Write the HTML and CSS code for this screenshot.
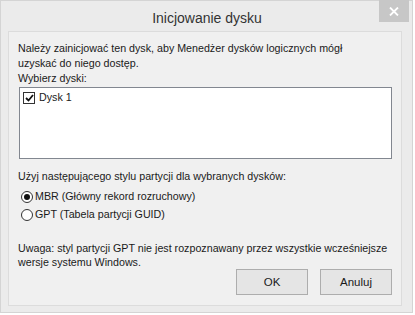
FILE: index.html
```html
<!DOCTYPE html>
<html lang="pl">
<head>
  <meta charset="UTF-8">
  <title>Inicjowanie dysku</title>
  <link rel="stylesheet" href="styles.css">
</head>
<body>
  <div class="window">
    <header class="titlebar">
      <span class="title">Inicjowanie dysku</span>
      <button type="button" class="close-btn" aria-label="Zamknij">
        <svg width="10" height="9" viewBox="0 0 10 9">
          <path d="M1 0.5 L9 8.5 M9 0.5 L1 8.5" stroke="#fff" stroke-width="1.8" fill="none"/>
        </svg>
      </button>
    </header>
    <main class="client">
      <p class="intro">Należy zainicjować ten dysk, aby Menedżer dysków logicznych mógł<br>uzyskać do niego dostęp.</p>

      <p class="label">Wybierz dyski:</p>
      <div class="listbox">
        <label class="check-row">
          <span class="checkbox">
            <svg width="9" height="8" viewBox="0 0 9 8">
              <path d="M1 4 L3.5 6.5 L8 1" stroke="#111" stroke-width="1.8" fill="none"/>
            </svg>
          </span>
          Dysk 1
        </label>
      </div>

      <p class="label styles-label">Użyj następującego stylu partycji dla wybranych dysków:</p>
      <div class="radio-group">
        <label class="radio-row"><span class="radio checked"></span>MBR (Główny rekord rozruchowy)</label>
        <label class="radio-row"><span class="radio"></span>GPT (Tabela partycji GUID)</label>
      </div>

      <p class="note">Uwaga: styl partycji GPT nie jest rozpoznawany przez wszystkie wcześniejsze<br>wersje systemu Windows.</p>

      <div class="buttons">
        <button type="button" class="btn">OK</button>
        <button type="button" class="btn">Anuluj</button>
      </div>
    </main>
  </div>
</body>
</html>
```

FILE: styles.css
```css
body {
  margin: 0;
  background: #fff;
  font-family: "Liberation Sans", Arial, sans-serif;
  font-size: 10.7px;
  color: #1a1a1a;
}
.window {
  box-sizing: border-box;
  width: 413px;
  height: 313px;
  border: 1px solid #d4d4d4;
  background: #ebebeb;
  display: flex;
  flex-direction: column;
}
.titlebar {
  height: 30px;
  flex-shrink: 0;
  display: flex;
  align-items: center;
  justify-content: center;
  position: relative;
}
.title {
  font-size: 14px;
  color: #333;
  margin-top: 3px;
  padding-left: 1px;
}
.close-btn {
  position: absolute;
  top: -1px;
  right: 3px;
  width: 30px;
  height: 22px;
  border: none;
  background: #c7c7c7;
  display: flex;
  align-items: center;
  justify-content: center;
  padding: 0;
}
.client {
  flex: 1;
  margin: 0 10px 6px 7px;
  border: 1px solid #dcdcdc;
  background: #f0f0f0;
  padding: 9px 9px 0 9px;
  white-space: nowrap;
}
p {
  margin: 0;
  line-height: 15px;
}
.label {
  line-height: 14px;
  margin-bottom: 2px;
}
.listbox {
  box-sizing: border-box;
  height: 72px;
  margin-left: 1px;
  border: 1px solid #828790;
  background: #fff;
  padding: 2px 3px;
  margin-bottom: 10px;
}
.check-row {
  display: flex;
  align-items: center;
  gap: 4px;
  line-height: 15px;
}
.checkbox {
  width: 10px;
  height: 10px;
  border: 1px solid #333;
  background: #fff;
  display: flex;
  align-items: center;
  justify-content: center;
}
.styles-label {
  line-height: 15px;
  margin-bottom: 5px;
}
.radio-group {
  display: flex;
  flex-direction: column;
  gap: 3px;
  margin-bottom: 19px;
  padding-left: 3px;
}
.radio-row {
  display: flex;
  align-items: center;
  gap: 2px;
  line-height: 15px;
}
.radio {
  width: 10px;
  height: 10px;
  border: 1px solid #333;
  border-radius: 50%;
  background: #fff;
  position: relative;
}
.radio.checked::after {
  content: "";
  position: absolute;
  left: 2px;
  top: 2px;
  width: 6px;
  height: 6px;
  border-radius: 50%;
  background: #111;
}
.note {
  line-height: 14px;
}
.buttons {
  display: flex;
  justify-content: flex-end;
  gap: 12px;
  padding-right: 0;
}
.btn {
  width: 72px;
  height: 26px;
  border: 1px solid #adadad;
  background: #e5e5e5;
  font-family: inherit;
  font-size: 11.5px;
  color: #1a1a1a;
}
```
